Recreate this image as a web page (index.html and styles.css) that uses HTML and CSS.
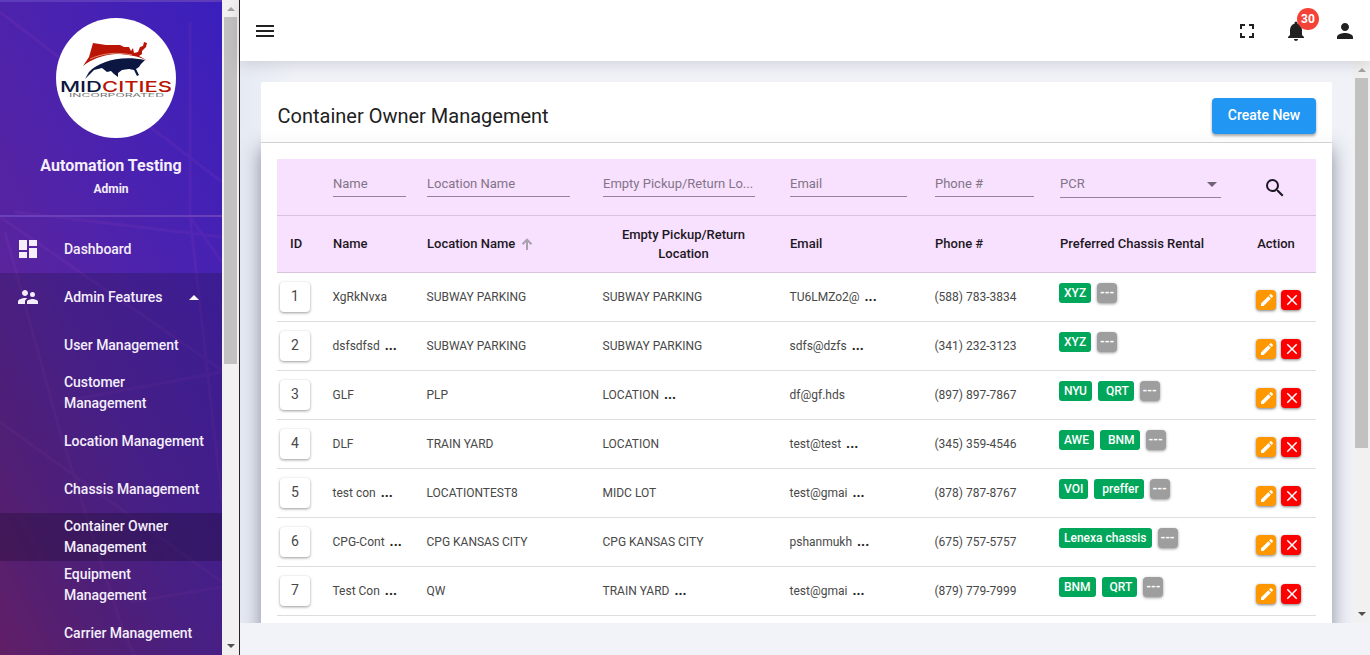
FILE: index.html
```html
<!DOCTYPE html>
<html lang="en">
<head>
<meta charset="utf-8">
<title>Container Owner Management</title>
<link rel="stylesheet" href="styles.css">
</head>
<body>
<svg class="defs" width="0" height="0">
  <symbol id="pencil" viewBox="0 0 24 24"><path d="M3 17.25V21h3.75L17.81 9.94l-3.75-3.75L3 17.25zM20.71 7.04a1 1 0 0 0 0-1.41l-2.34-2.34a1 1 0 0 0-1.41 0l-1.83 1.83 3.75 3.75 1.83-1.83z"/></symbol>
  <symbol id="cross" viewBox="0 0 24 24"><path d="M19 6.41 17.59 5 12 10.59 6.41 5 5 6.41 10.59 12 5 17.59 6.41 19 12 13.41 17.59 19 19 17.59 13.41 12z"/></symbol>
</svg>
<div class="app">
  <aside class="sidebar">
    <div class="side-body">
      <svg class="side-art" viewBox="0 0 222 655" preserveAspectRatio="none"><path d="M0 10L222 180M0 215L222 368M0 420L222 580M190 20V215L222 500M190 215L222 260M5 230L60 430L120 620L135 655M15 210L222 235M222 370L60 400M222 585L130 600"/></svg>
      <div class="profile">
        <svg class="logo" viewBox="0 0 120 120">
          <circle cx="60" cy="60" r="60" fill="#fff"/>
          <path fill="#b91405" d="M27 48L33 39L37 25L50 27L64 27L68 29L73 29L75 33L77 30L78 35L82 34L84 29L87 28L88 24L91 25L90 29L86 33L86 36L83 38L92 43C82 38 71 36 60 36C46 37 36 41 27 48Z"/>
          <path d="M34 41C47 35 61 34 76 37" fill="none" stroke="#e9a58d" stroke-width=".8"/>
          <path fill="#0b1741" d="M29 61L33 54C43 44 63 37 89 42L85 46L83 49L80 51L83 57L81 58L78 52L73 51L66 52L62 55L62 59L58 56L55 53L51 54L46 50L38 52Z"/>
          <text x="4" y="73.500" font-size="14.5" class="logo-name" textLength="42" lengthAdjust="spacingAndGlyphs" fill="#0b1741">MID</text>
          <text x="46" y="73.500" font-size="14.5" class="logo-name" textLength="70" lengthAdjust="spacingAndGlyphs" fill="#b91405">CITIES</text>
          <text x="13" y="78.500" font-size="4.5" class="logo-sub" textLength="95" lengthAdjust="spacingAndGlyphs">INCORPORATED</text>
        </svg>
        <div class="user-name">Automation Testing</div>
        <div class="user-role">Admin</div>
      </div>
      <nav class="nav">
        <a class="item"><svg class="ico" viewBox="0 0 24 24"><path d="M3 13h8V3H3v10zm0 8h8v-6H3v6zm10 0h8V11h-8v10zm0-18v6h8V3h-8z"/></svg><span>Dashboard</span></a>
        <div class="group">
          <a class="item"><svg class="ico" viewBox="0 0 24 24"><path d="M16.5 12a2.5 2.5 0 1 0 0-5 2.5 2.5 0 0 0 0 5zM9 11c1.66 0 2.99-1.34 2.99-3S10.66 5 9 5 6 6.34 6 8s1.34 3 3 3zm7.5 3c-1.83 0-5.5.92-5.5 2.75V19h11v-2.25c0-1.83-3.67-2.75-5.5-2.75zM9 13c-2.33 0-7 1.17-7 3.5V19h7v-2.25c0-.85.33-2.34 2.37-3.47C10.5 13.1 9.66 13 9 13z"/></svg><span>Admin Features</span><i class="up"></i></a>
          <a class="item sub">User Management</a>
          <a class="item sub">Customer<br>Management</a>
          <a class="item sub">Location Management</a>
          <a class="item sub">Chassis Management</a>
          <a class="item sub active">Container Owner<br>Management</a>
          <a class="item sub">Equipment<br>Management</a>
          <a class="item sub">Carrier Management</a>
        </div>
      </nav>
    </div>
    <div class="bar side-bar"><i class="arr arr-up"></i><i class="thumb"></i><i class="arr arr-down"></i></div>
  </aside>

  <div class="main">
    <header class="top">
      <svg class="ico" viewBox="0 0 24 24"><path d="M3 18h18v-2H3v2zm0-5h18v-2H3v2zm0-7v2h18V6H3z"/></svg>
      <div class="top-right">
        <svg class="ico" viewBox="0 0 24 24"><path d="M7 14H5v5h5v-2H7v-3zm-2-4h2V7h3V5H5v5zm12 7h-3v2h5v-5h-2v3zM14 5v2h3v3h2V5h-5z"/></svg>
        <div class="bell"><svg class="ico" viewBox="0 0 24 24"><path d="M12 22c1.100 0 2-.9 2-2h-4c0 1.100.89 2 2 2zm6-6v-5c0-3.070-1.640-5.640-4.500-6.320V4a1.500 1.500 0 0 0-3 0v.68C7.630 5.360 6 7.920 6 11v5l-2 2v1h16v-1l-2-2z"/></svg><span class="count">30</span></div>
        <svg class="ico" viewBox="0 0 24 24"><path d="M12 12c2.210 0 4-1.790 4-4s-1.790-4-4-4-4 1.790-4 4 1.790 4 4 4zm0 2c-2.670 0-8 1.340-8 4v2h16v-2c0-2.660-5.330-4-8-4z"/></svg>
      </div>
    </header>
    <div class="scroll">
      <div class="content">
        <div class="card-head"><h1>Container Owner Management</h1><button class="create">Create New</button></div>
        <div class="card">
          <div class="table">
            <div class="row filters">
              <span></span>
              <div class="field f-name">Name</div>
              <div class="field f-loc">Location Name</div>
              <div class="field f-empty">Empty Pickup/Return Lo...</div>
              <div class="field f-email">Email</div>
              <div class="field f-phone">Phone #</div>
              <div class="field f-pcr">PCR<i class="caret"></i></div>
              <svg class="ico search" viewBox="0 0 24 24"><path d="M15.5 14h-.79l-.28-.27A6.47 6.47 0 0 0 16 9.5 6.5 6.5 0 1 0 9.5 16c1.61 0 3.09-.59 4.23-1.57l.27.28v.79l5 4.99L20.49 19l-4.99-5zm-6 0a4.5 4.5 0 1 1 0-9 4.5 4.5 0 0 1 0 9z"/></svg>
            </div>
            <div class="row heads">
              <span class="h-id">ID</span><span>Name</span>
              <span class="sorted">Location Name<svg class="sort" viewBox="0 0 12 12"><path d="M6 12V2M1.5 6.2L6 1.7L10.5 6.2" fill="none" stroke="currentColor" stroke-width="2"/></svg></span>
              <span class="h-empty">Empty Pickup/Return<br>Location</span>
              <span>Email</span><span>Phone #</span><span>Preferred Chassis Rental</span><span class="h-action">Action</span>
            </div>
            <div class="row"><b class="id">1</b><span>XgRkNvxa</span><span>SUBWAY PARKING</span><span>SUBWAY PARKING</span><span>TU6LMZo2@<em>...</em></span><span>(588) 783-3834</span><div class="tags"><u>XYZ</u><s>---</s></div><div class="acts"><svg class="edit"><use href="#pencil"/></svg><svg class="del"><use href="#cross"/></svg></div></div>
            <div class="row"><b class="id">2</b><span>dsfsdfsd<em>...</em></span><span>SUBWAY PARKING</span><span>SUBWAY PARKING</span><span>sdfs@dzfs<em>...</em></span><span>(341) 232-3123</span><div class="tags"><u>XYZ</u><s>---</s></div><div class="acts"><svg class="edit"><use href="#pencil"/></svg><svg class="del"><use href="#cross"/></svg></div></div>
            <div class="row"><b class="id">3</b><span>GLF</span><span>PLP</span><span>LOCATION<em>...</em></span><span>df@gf.hds</span><span>(897) 897-7867</span><div class="tags"><u>NYU</u><u>QRT</u><s>---</s></div><div class="acts"><svg class="edit"><use href="#pencil"/></svg><svg class="del"><use href="#cross"/></svg></div></div>
            <div class="row"><b class="id">4</b><span>DLF</span><span>TRAIN YARD</span><span>LOCATION</span><span>test@test<em>...</em></span><span>(345) 359-4546</span><div class="tags"><u>AWE</u><u>BNM</u><s>---</s></div><div class="acts"><svg class="edit"><use href="#pencil"/></svg><svg class="del"><use href="#cross"/></svg></div></div>
            <div class="row"><b class="id">5</b><span>test con<em>...</em></span><span>LOCATIONTEST8</span><span>MIDC LOT</span><span>test@gmai<em>...</em></span><span>(878) 787-8767</span><div class="tags"><u>VOI</u><u>preffer</u><s>---</s></div><div class="acts"><svg class="edit"><use href="#pencil"/></svg><svg class="del"><use href="#cross"/></svg></div></div>
            <div class="row"><b class="id">6</b><span>CPG-Cont<em>...</em></span><span>CPG KANSAS CITY</span><span>CPG KANSAS CITY</span><span>pshanmukh<em>...</em></span><span>(675) 757-5757</span><div class="tags"><u>Lenexa chassis</u><s>---</s></div><div class="acts"><svg class="edit"><use href="#pencil"/></svg><svg class="del"><use href="#cross"/></svg></div></div>
            <div class="row"><b class="id">7</b><span>Test Con<em>...</em></span><span>QW</span><span>TRAIN YARD<em>...</em></span><span>test@gmai<em>...</em></span><span>(879) 779-7999</span><div class="tags"><u>BNM</u><u>QRT</u><s>---</s></div><div class="acts"><svg class="edit"><use href="#pencil"/></svg><svg class="del"><use href="#cross"/></svg></div></div>
          </div>
        </div>
      </div>
      <div class="bar main-bar"><i class="arr arr-up"></i><i class="thumb"></i><i class="arr arr-down"></i></div>
    </div>
  </div>
</div>
</body>
</html>
```
FILE: styles.css
```css
* { box-sizing: border-box; }
body { margin: 0; font-family: Roboto, "Liberation Sans", sans-serif; color: #212121; }
.defs { position: absolute; }
.app { display: flex; width: 1370px; height: 655px; overflow: hidden; background: #f2f3f8; }
.ico { width: 24px; height: 24px; fill: currentColor; flex: none; display: block; }

/* Sidebar */
.sidebar { display: flex; width: 240px; flex: none; border-right: 1px solid #2b2024; }
.side-body { position: relative; width: 222px; overflow: hidden; color: #f4eefb;
  background: linear-gradient(63deg, #7a2378 0%, #65258a 18%, #5624a2 42%, #4a22b0 68%, #3a1fbd 100%); border-top: 2px solid #5e3bbb; }
.side-art { position: absolute; inset: 0; width: 222px; height: 655px; fill: none; stroke: #b04ac0; stroke-width: 3; opacity: .1; }
.profile { position: relative; height: 215px; padding-top: 16px; text-align: center; border-bottom: 2px solid #6a3fba; }
.logo { display: block; width: 120px; height: 120px; margin-left: 56px; }
.logo-name { font-family: Inter, sans-serif; font-weight: 500; }
.logo-sub { font-family: Inter, sans-serif; fill: #777; }
.user-name { margin-top: 17px; font-size: 16px; line-height: 22px; font-weight: 700; }
.user-role { margin-top: 4px; font-size: 12px; line-height: 16px; font-weight: 700; }
.nav { position: relative; padding-top: 8px; font-size: 14px; line-height: 21px; font-weight: 500; letter-spacing: -.03px; }
.item { display: flex; align-items: center; height: 48px; padding-left: 16px; }
.item span { margin-left: 24px; }
.sub { padding-left: 64px; }
.group { background: rgba(25, 15, 50, .25); }
.active { background: rgba(20, 10, 35, .3); }
.up { margin-left: 27px; border: 5px solid transparent; border-top: 0; border-bottom-color: #fff; }

/* Scroll bars */
.bar { width: 17px; flex: none; display: flex; flex-direction: column; align-items: center; background: #f1f1f1; }
.thumb { width: 13px; background: #c1c1c1; }
.arr { border: 4px solid transparent; }
.arr-up { border-top: 0; border-bottom-color: #a3a3a3; margin: 7px 0 6px; }
.arr-down { border-bottom: 0; border-top-color: #505050; margin: auto 0 7px; }
.side-bar .thumb { height: 347px; }
.main-bar .thumb { height: 370px; }

/* Header */
.main { flex: 1; min-width: 0; }
.top { position: relative; z-index: 2; display: flex; align-items: center; justify-content: space-between; height: 61px; padding: 0 13px; background: #fff; box-shadow: 0 3px 14px rgba(69, 65, 78, .18); }
.top-right { display: flex; gap: 25px; }
.bell { position: relative; }
.count { position: absolute; top: -11px; left: 13px; width: 22px; height: 22px; border-radius: 50%; background: #f44336; color: #fff; font-size: 12px; line-height: 22px; font-weight: 700; text-align: center; }

/* Content */
.scroll { display: flex; height: 562px; overflow: hidden; background: #f0f2f8; }
.content { flex: 1; padding: 21px 21px 0; background: linear-gradient(90deg, #e6eaf3, #f0f2f8 5%, #f0f2f8); }
.card-head { position: relative; z-index: 1; display: flex; align-items: center; justify-content: space-between; height: 61px; padding: 7px 16px 0 16.500px; background: linear-gradient(#fff 80%, #fafafa); border-bottom: 1px solid #d2d2d2; border-radius: 2px 2px 0 0; }
h1 { margin: 0; font-size: 20px; line-height: 28px; font-weight: 400; }
.create { width: 104px; height: 36px; padding: 0 0 2px; border: 0; border-radius: 4px; background: #2196f3; color: #fff; font: 500 14px Roboto, sans-serif; box-shadow: 0 2px 3px rgba(0, 0, 0, .35); }
.card { height: 600px; padding: 16px; background: #fff; box-shadow: 0 5px 18px rgba(50, 55, 85, .55); }

/* Table */
.row { display: grid; grid-template-columns: 55px 94px 176px 187px 145px 125px 177px 80px; align-items: center; height: 49px; border-bottom: 1px solid #ddd; font-size: 12px; font-weight: 400; color: #484848; }
.row > span { white-space: nowrap; padding-left: .5px; }
.filters, .heads { height: 57px; background: #f8e1ff; border-color: #d8c3df; font-size: 13px; color: #1c1722; }
.filters { align-items: start; }
.field { height: 38px; padding-top: 16px; margin-left: 1px; border-bottom: 1px solid #92839a; color: #837488; line-height: 17px; white-space: nowrap; }
.f-name { width: 73px; }
.f-loc { width: 143px; }
.f-empty { width: 152px; }
.f-email { width: 117px; }
.f-phone { width: 99px; }
.f-pcr { display: flex; justify-content: space-between; width: 161px; height: 39px; }
.caret { margin: 7px 4px 0 0; height: 5px; border: 5px solid transparent; border-bottom: 0; border-top-color: #6f6374; }
.search { margin: 17px 0 0 27px; }
.heads { font-weight: 500; line-height: 19px; }
.heads > span { padding: 0 0 1px 1px; }
.heads > .h-id { padding-left: 13px; }
.heads > .h-empty { width: 162px; padding-bottom: 0; text-align: center; }
.heads > .h-action { padding-left: 0; text-align: center; }
.sort { width: 12px; height: 12px; margin-left: 6px; vertical-align: -2px; color: #aaa0b0; }
.id { width: 30px; height: 30px; margin-left: 3px; border-radius: 4px; background: #fff; font-size: 14px; line-height: 29px; font-weight: 400; text-align: center; box-shadow: 0 1px 3px rgba(0, 0, 0, .4); }
.row em { margin-left: 5px; font-style: normal; font-weight: 700; font-size: 14px; line-height: 12px; color: #222; }
.tags { display: flex; align-self: start; gap: 6px; padding-top: 10px; color: #fff; font-weight: 500; line-height: 20px; }
.tags u, .tags s { height: 20px; padding: 0 5px; border-radius: 3px; background: #00a65a; text-decoration: none; white-space: nowrap; }
.tags u + u { padding-left: 8px; }
.tags s { width: 20px; padding: 0; text-align: center; font-weight: 700; border-radius: 4px; background: #9e9e9e; box-shadow: 0 1px 3px rgba(0, 0, 0, .4); }
.acts { display: flex; gap: 5px; padding: 5px 0 0 20px; }
.acts svg { width: 20px; height: 20px; padding: 2px; border-radius: 4px; fill: #fff; box-shadow: 0 1px 3px rgba(0, 0, 0, .5); }
.acts .edit { background: #ff9800; padding: 2px 1px 2px 3px; }
.acts .del { background: #f00; padding: 1px 0 1px 2px; }
```
